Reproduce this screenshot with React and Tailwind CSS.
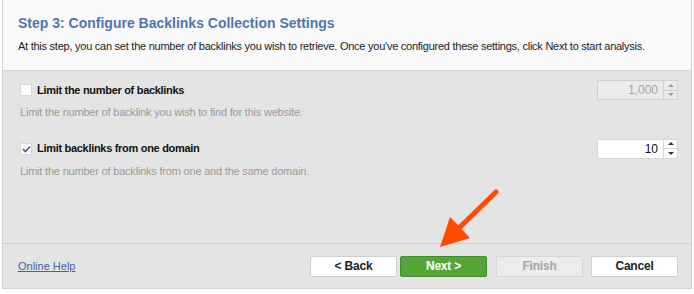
import React from "react";

function Spinner({ value, disabled }) {
  return (
    <div className="flex h-[20px]">
      <div
        className={`w-[67px] h-full border flex items-center justify-end pr-[5px] text-[12px] ${
          disabled ? "bg-[#ebebeb] border-[#d0d0d0] text-[#a8a8a8]" : "bg-white border-[#d6d6d6] text-[#111]"
        }`}
      >
        {value}
      </div>
      <div className="w-[14px] h-full flex flex-col">
        <div className={`flex-1 border border-l-0 flex items-center justify-center ${disabled ? "bg-[#ebebeb] border-[#d0d0d0]" : "bg-white border-[#d6d6d6]"}`}>
          <span className={`block w-0 h-0 border-x-[3px] border-x-transparent border-b-[3px] ${disabled ? "border-b-[#999]" : "border-b-[#333]"}`} />
        </div>
        <div className={`flex-1 border border-l-0 border-t-0 flex items-center justify-center ${disabled ? "bg-[#ebebeb] border-[#d0d0d0]" : "bg-white border-[#d6d6d6]"}`}>
          <span className={`block w-0 h-0 border-x-[3px] border-x-transparent border-t-[3px] ${disabled ? "border-t-[#999]" : "border-t-[#333]"}`} />
        </div>
      </div>
    </div>
  );
}

function Option({ checked, label, desc, value, disabled }) {
  return (
    <div>
      <div className="flex items-center justify-between h-[20px]">
        <div className="flex items-center gap-[5px]">
          <div className="w-[12px] h-[12px] bg-white border border-[#d8d8d8] flex items-center justify-center">
            {checked && (
              <svg width="9" height="8" viewBox="0 0 9 8">
                <path d="M1 4.2 L3.4 6.5 L8 1.5" fill="none" stroke="#3b5f9a" strokeWidth="1.6" />
              </svg>
            )}
          </div>
          <span className="text-[11px] font-bold text-[#111] tracking-[-0.3px]">{label}</span>
        </div>
        <Spinner value={value} disabled={disabled} />
      </div>
      <p className="mt-[4px] text-[11px] tracking-[-0.2px] text-[#9a9a9a]">{desc}</p>
    </div>
  );
}

function Btn({ children, variant }) {
  const styles = {
    plain: "bg-white border-[#cfcfcf] text-[#222]",
    next: "bg-[#55a537] border-[#3f8a29] text-white",
    disabled: "bg-[#ececec] border-[#d6d6d6] text-[#a5a5a5]",
  };
  return (
    <div className={`w-[87px] h-[21px] border rounded-[2px] flex items-center justify-center text-[12px] font-bold tracking-[-0.2px] ${styles[variant]}`}>
      {children}
    </div>
  );
}

export default function App() {
  return (
    <div
      className="relative w-[694px] h-[294px] bg-white overflow-hidden"
      style={{ fontFamily: "'Liberation Sans', Arial, sans-serif" }}
    >
      <div className="ml-[2px] w-[690px] h-[289px] border border-t-0 border-[#d2d2d2] bg-[#e4e4e4] flex flex-col">
        {/* Header */}
        <div className="h-[71px] bg-[#fafafa] border-b border-[#d4d4d4] pl-[15px] pt-[14px]">
          <h1 className="text-[14px] font-bold text-[#4f76ad] leading-[18px]">
            Step 3: Configure Backlinks Collection Settings
          </h1>
          <p className="mt-[7px] text-[11px] tracking-[-0.25px] whitespace-nowrap text-[#1a1a1a] leading-[14px]">
            At this step, you can set the number of backlinks you wish to retrieve. Once you've configured these settings, click Next to start analysis.
          </p>
        </div>

        {/* Options */}
        <div className="flex-1 pl-[17px] pr-[13px] pt-[9px] flex flex-col gap-[18px]">
          <Option
            label="Limit the number of backlinks"
            desc="Limit the number of backlink you wish to find for this website."
            value="1,000"
            disabled
          />
          <Option
            checked
            label="Limit backlinks from one domain"
            desc="Limit the number of backlinks from one and the same domain."
            value="10"
          />
        </div>

        {/* Footer */}
        <div className="h-[45px] border-t border-[#cfcfcf] flex items-center pl-[15px] pr-[13px]">
          <a className="text-[11px] text-[#3c64a0] underline">Online Help</a>
          <div className="ml-auto flex gap-[3px]">
            <Btn variant="plain">&lt; Back</Btn>
            <Btn variant="next">Next &gt;</Btn>
            <div className="ml-[6px] flex gap-[8px]">
              <Btn variant="disabled">Finish</Btn>
              <Btn variant="plain">Cancel</Btn>
            </div>
          </div>
        </div>
      </div>

      {/* Annotation arrow */}
      <svg className="absolute left-[428px] top-[183px]" width="80" height="70" viewBox="0 0 80 70">
        <line x1="68" y1="9" x2="30" y2="46" stroke="#ff4a00" strokeWidth="5" strokeLinecap="round" />
        <polygon points="12,64 22,34 42,55" fill="#ff4a00" />
      </svg>
    </div>
  );
}
